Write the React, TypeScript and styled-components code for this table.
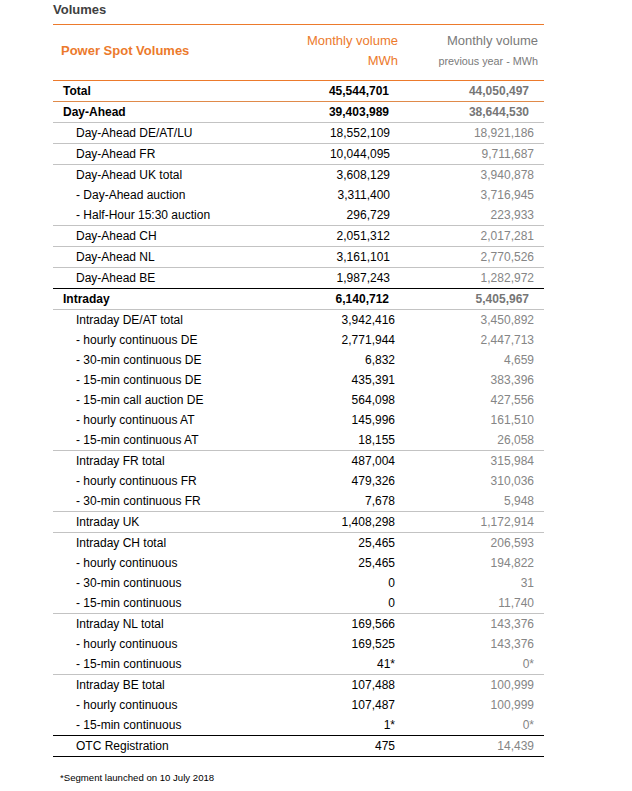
import React from "react";
import styled, { createGlobalStyle } from "styled-components";

const Global = createGlobalStyle`
  html, body { margin: 0; padding: 0; background: #fff; }
  body { font-family: "Liberation Sans", Arial, sans-serif; color: #000; }
`;

const ORANGE = "#ec7a2c";
const LINE = { orange: "#e08a4a", gray: "#c3c3c3", black: "#000" } as const;
type LineKind = keyof typeof LINE;

const Page = styled.div`
  width: 491px;
  margin-left: 53px;
`;

const Title = styled.div`
  height: 24px;
  font-size: 13px;
  font-weight: bold;
  color: #404040;
  line-height: 19px;
  border-bottom: 1px solid ${ORANGE};
`;

const HeaderRow = styled.div`
  display: grid;
  grid-template-columns: 1fr 148px 146px;
  height: 52px;
  padding-bottom: 3px;
  align-items: center;
  border-bottom: 1px solid ${ORANGE};
`;

const HeaderLabel = styled.div`
  padding-left: 8px;
  font-size: 13px;
  font-weight: bold;
  color: ${ORANGE};
  line-height: 20px;
`;

const HeaderCol = styled.div<{ $tone: "orange" | "gray" }>`
  text-align: right;
  padding-right: ${(p) => (p.$tone === "orange" ? "0" : "6px")};
  color: ${(p) => (p.$tone === "orange" ? ORANGE : "#7a7a7a")};
  font-size: 13px;
  line-height: 20px;
`;

const SubLine = styled.div<{ $small?: boolean }>`
  font-size: ${(p) => (p.$small ? "10.8px" : "13px")};
`;

const Group = styled.div<{ $line: LineKind }>`
  border-bottom: 1px solid ${(p) => LINE[p.$line]};
`;

const Row = styled.div`
  display: grid;
  grid-template-columns: 1fr 148px 146px;
  height: 20px;
  align-items: center;
  font-size: 12px;
  line-height: 20px;
`;

const Label = styled.div<{ $bold?: boolean }>`
  padding-left: ${(p) => (p.$bold ? "10px" : "23px")};
  font-weight: ${(p) => (p.$bold ? "bold" : "normal")};
  white-space: nowrap;
`;

const Value = styled.div<{ $bold?: boolean; $pad: number }>`
  text-align: right;
  padding-right: ${(p) => (p.$bold ? 9 : p.$pad)}px;
  font-weight: ${(p) => (p.$bold ? "bold" : "normal")};
`;

const Prev = styled.div<{ $bold?: boolean }>`
  text-align: right;
  padding-right: ${(p) => (p.$bold ? 15 : 10)}px;
  font-weight: ${(p) => (p.$bold ? "bold" : "normal")};
  color: ${(p) => (p.$bold ? "#767676" : "#858585")};
`;

const Footnote = styled.div`
  margin-top: 15px;
  padding-left: 7px;
  font-size: 9.6px;
  line-height: 12px;
  color: #000;
`;

type R = [string, string, string];
type G = { line: LineKind; bold?: boolean; pad: number; rows: R[] };

const groups: G[] = [
  { line: "orange", bold: true, pad: 9, rows: [["Total", "45,544,701", "44,050,497"]] },
  { line: "gray", bold: true, pad: 9, rows: [["Day-Ahead", "39,403,989", "38,644,530"]] },
  { line: "gray", pad: 8, rows: [["Day-Ahead DE/AT/LU", "18,552,109", "18,921,186"]] },
  { line: "gray", pad: 8, rows: [["Day-Ahead FR", "10,044,095", "9,711,687"]] },
  {
    line: "gray",
    pad: 8,
    rows: [
      ["Day-Ahead UK total", "3,608,129", "3,940,878"],
      ["- Day-Ahead auction", "3,311,400", "3,716,945"],
      ["- Half-Hour 15:30 auction", "296,729", "223,933"],
    ],
  },
  { line: "gray", pad: 8, rows: [["Day-Ahead CH", "2,051,312", "2,017,281"]] },
  { line: "gray", pad: 8, rows: [["Day-Ahead NL", "3,161,101", "2,770,526"]] },
  { line: "black", pad: 8, rows: [["Day-Ahead BE", "1,987,243", "1,282,972"]] },
  { line: "gray", bold: true, pad: 8, rows: [["Intraday", "6,140,712", "5,405,967"]] },
  {
    line: "gray",
    pad: 3,
    rows: [
      ["Intraday DE/AT total", "3,942,416", "3,450,892"],
      ["- hourly continuous DE", "2,771,944", "2,447,713"],
      ["- 30-min continuous DE", "6,832", "4,659"],
      ["- 15-min continuous DE", "435,391", "383,396"],
      ["- 15-min call auction DE", "564,098", "427,556"],
      ["- hourly continuous AT", "145,996", "161,510"],
      ["- 15-min continuous AT", "18,155", "26,058"],
    ],
  },
  {
    line: "gray",
    pad: 3,
    rows: [
      ["Intraday FR total", "487,004", "315,984"],
      ["- hourly continuous FR", "479,326", "310,036"],
      ["- 30-min continuous FR", "7,678", "5,948"],
    ],
  },
  { line: "gray", pad: 3, rows: [["Intraday UK", "1,408,298", "1,172,914"]] },
  {
    line: "gray",
    pad: 3,
    rows: [
      ["Intraday CH total", "25,465", "206,593"],
      ["- hourly continuous", "25,465", "194,822"],
      ["- 30-min continuous", "0", "31"],
      ["- 15-min continuous", "0", "11,740"],
    ],
  },
  {
    line: "gray",
    pad: 3,
    rows: [
      ["Intraday NL total", "169,566", "143,376"],
      ["- hourly continuous", "169,525", "143,376"],
      ["- 15-min continuous", "41*", "0*"],
    ],
  },
  {
    line: "black",
    pad: 3,
    rows: [
      ["Intraday BE total", "107,488", "100,999"],
      ["- hourly continuous", "107,487", "100,999"],
      ["- 15-min continuous", "1*", "0*"],
    ],
  },
  { line: "black", pad: 3, rows: [["OTC Registration", "475", "14,439"]] },
];

export default function App() {
  return (
    <>
      <Global />
      <Page>
        <Title>Volumes</Title>
        <HeaderRow>
          <HeaderLabel>Power Spot Volumes</HeaderLabel>
          <HeaderCol $tone="orange">
            <SubLine>Monthly volume</SubLine>
            <SubLine>MWh</SubLine>
          </HeaderCol>
          <HeaderCol $tone="gray">
            <SubLine>Monthly volume</SubLine>
            <SubLine $small>previous year - MWh</SubLine>
          </HeaderCol>
        </HeaderRow>
        {groups.map((g, gi) => (
          <Group key={gi} $line={g.line}>
            {g.rows.map(([label, v, p], ri) => (
              <Row key={ri}>
                <Label $bold={g.bold}>{label}</Label>
                <Value $bold={g.bold} $pad={g.pad}>{v}</Value>
                <Prev $bold={g.bold}>{p}</Prev>
              </Row>
            ))}
          </Group>
        ))}
        <Footnote>*Segment launched on 10 July 2018</Footnote>
      </Page>
    </>
  );
}
